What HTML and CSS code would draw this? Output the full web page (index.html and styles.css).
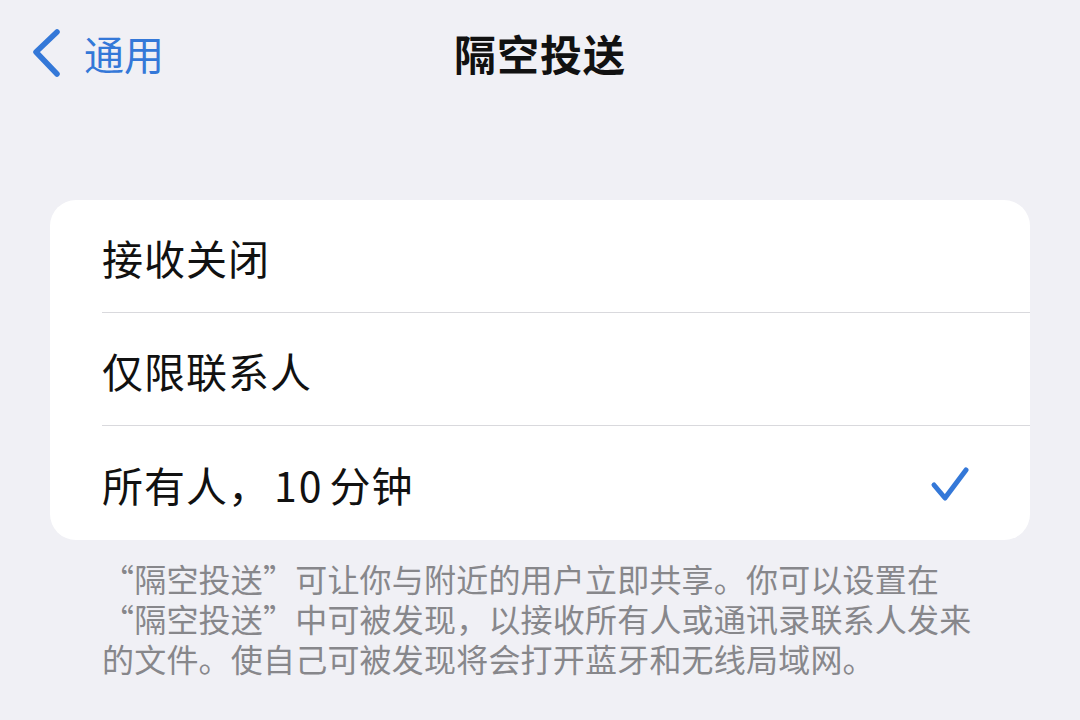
FILE: index.html
```html
<!DOCTYPE html>
<html lang="zh-CN">
<head>
<meta charset="utf-8">
<link rel="stylesheet" href="styles.css">
</head>
<body>
<header class="nav">
  <a class="back">
    <svg class="chev" width="34" height="52" viewBox="0 0 34 52"><polyline points="27,4 6,24 27,46" fill="none" stroke="#3478d8" stroke-width="5.5" stroke-linecap="round" stroke-linejoin="round"/></svg>
    <span class="back-label">通用</span>
  </a>
  <h1 class="title">隔空投送</h1>
  <div></div>
</header>
<main class="content">
  <section class="card">
    <div class="row"><span class="label">接收关闭</span></div>
    <div class="row"><span class="label">仅限联系人</span></div>
    <div class="row"><span class="label">所有人，<span class="num">10</span>分钟</span>
      <svg class="check" width="40" height="36" viewBox="0 0 40 36"><polyline points="4,19 15,32 36,4" fill="none" stroke="#3478d8" stroke-width="5" stroke-linecap="round" stroke-linejoin="round"/></svg>
    </div>
  </section>
  <p class="footer">“隔空投送”可让你与附近的用户立即共享。你可以设置在“隔空投送”中可被发现，以接收所有人或通讯录联系人发来的文件。使自己可被发现将会打开蓝牙和无线局域网。</p>
</main>
</body>
</html>
```
FILE: styles.css
```css
html, body {
  margin: 0;
  padding: 0;
  background: #f0f0f5;
  width: 1080px;
  height: 720px;
  overflow: hidden;
  font-family: "Noto Sans CJK SC", "Noto Sans", sans-serif;
  color: #111;
}
.nav {
  height: 112px;
  display: grid;
  grid-template-columns: 1fr auto 1fr;
  align-items: center;
  padding-bottom: 6px;
  box-sizing: border-box;
}
.back {
  display: flex;
  align-items: center;
  padding-left: 30px;
  color: #3478d8;
  gap: 20px;
}
.chev { display: block; margin-top: 2px; }
.back-label {
  font-size: 40px;
  line-height: 1;
}
.title {
  margin: 0;
  font-size: 42px;
  font-weight: 700;
  line-height: 1;
  letter-spacing: 1px;
}
.content {
  padding: 88px 50px 0;
}
.card {
  background: #fff;
  border-radius: 26px;
  overflow: hidden;
}
.row {
  height: 113px;
  margin-left: 52px;
  padding-right: 60px;
  display: flex;
  align-items: center;
  justify-content: space-between;
  border-bottom: 1.5px solid #d9d9dd;
  box-sizing: border-box;
}
.row:last-child { border-bottom: none; height: 114px; }
.label {
  font-size: 41px;
  line-height: 1;
  letter-spacing: 1px;
  padding-top: 2px;
}
.num {
  margin-left: 4px;
  margin-right: 6px;
  letter-spacing: 2px;
}
.check { display: block; margin-top: 2px; }
.footer {
  margin: 18px 0 0;
  padding: 0 52px;
  font-size: 32px;
  line-height: 40px;
  color: #87878b;
  letter-spacing: 0.2px;
}
```
